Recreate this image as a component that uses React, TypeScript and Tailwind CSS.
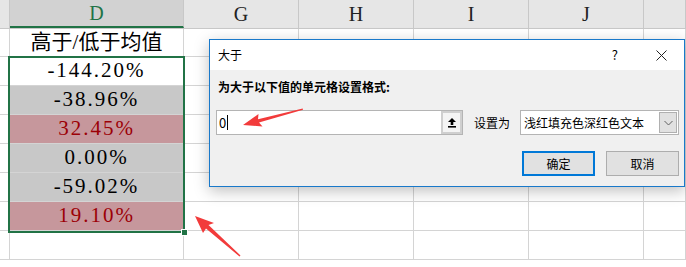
import React from 'react';

// 列宽（含右侧网格线）
const COLS = [
  { key: 'C', w: 'w-[10px]' },
  { key: 'D', w: 'w-[174px]' },
  { key: 'G', w: 'w-[115px]' },
  { key: 'H', w: 'w-[115px]' },
  { key: 'I', w: 'w-[115px]' },
  { key: 'J', w: 'w-[115px]' },
  { key: 'K', w: 'flex-1' },
];

const ROWS: { text: string; tone: 'title' | 'white' | 'grey' | 'red' | 'empty' }[] = [
  { text: '高于/低于均值', tone: 'title' },
  { text: '-144.20%', tone: 'white' },
  { text: '-38.96%', tone: 'grey' },
  { text: '32.45%', tone: 'red' },
  { text: '0.00%', tone: 'grey' },
  { text: '-59.02%', tone: 'grey' },
  { text: '19.10%', tone: 'red' },
  { text: '', tone: 'empty' },
];

const serif = { fontFamily: '"Liberation Serif", "Noto Sans CJK SC", serif' };
const ui = { fontFamily: '"Noto Sans CJK SC", "Liberation Sans", sans-serif' };

const toneClass = {
  title: 'bg-white text-black',
  white: 'bg-white text-black',
  grey: 'bg-[#c8c8c8] text-black',
  red: 'bg-[#c6979c] text-[#9c0006]',
  empty: 'bg-white',
};

const App: React.FC = () => {
  return (
    <div className="relative w-[686px] h-[267px] overflow-hidden bg-white select-none">
      {/* 列标题 */}
      <div className="flex h-[29px] bg-[#e6e6e6] border-b border-[#c8c8c8]">
        {COLS.map((c) => (
          <div
            key={c.key}
            className={`${c.w} shrink-0 flex items-center justify-center border-r border-[#c8c8c8] text-[20px] ${
              c.key === 'D' ? 'bg-[#d2d2d2] text-[#217346] border-b-2 border-b-[#217346]' : 'text-[#222]'
            }`}
            style={serif}
          >
            {c.key === 'C' || c.key === 'K' ? '' : c.key}
          </div>
        ))}
      </div>

      {/* 数据行 */}
      {ROWS.map((r, i) => (
        <div key={i} className={`flex ${i === 0 ? 'h-[28px]' : 'h-[29px]'}`}>
          {COLS.map((c) => (
            <div
              key={c.key}
              className={`${c.w} shrink-0 border-r border-b border-[#d4d4d4] ${
                c.key === 'D' ? `${toneClass[r.tone]} flex items-center justify-center` : ''
              } ${r.tone === 'title' ? 'text-[21px]' : 'text-[21px] tracking-[2px]'}`}
              style={serif}
            >
              {c.key === 'D' ? r.text : ''}
            </div>
          ))}
        </div>
      ))}

      {/* 选区边框 */}
      <div className="absolute left-[8px] top-[56px] w-[177px] h-[177px] border-2 border-[#217346] pointer-events-none" />
      <div className="absolute left-[181px] top-[229px] w-[7px] h-[7px] bg-[#217346] border border-white" />

      {/* 对话框 */}
      <div
        className="absolute left-[209px] top-[39px] w-[476px] h-[148px] border border-[#1979ca] bg-[#f0f0f0] shadow-[0_4px_14px_rgba(0,0,0,0.25)] flex flex-col"
        style={ui}
      >
        <div className="h-[30px] bg-white flex items-center pl-[8px] pr-[17px] text-[12px] text-black">
          <span className="flex-1">大于</span>
          <span className="mr-[38px] text-[13px]">?</span>
          <svg width="11" height="11" viewBox="0 0 11 11">
            <path d="M0.5 0.5 L10.5 10.5 M10.5 0.5 L0.5 10.5" stroke="#222" strokeWidth="1" />
          </svg>
        </div>

        <div className="pl-[6px] pr-[5px] pt-[9px]">
          <div className="pl-[2px] text-[12px] font-bold text-black leading-[16px]">为大于以下值的单元格设置格式:</div>

          <div className="flex items-center mt-[15px] h-[25px] whitespace-nowrap">
            <div className="w-[247px] shrink-0 h-full flex bg-white border border-[#b4b4b4]">
              <div className="flex-1 flex items-center pl-[2px] text-[13px] text-black">
                0<span className="ml-[1px] w-px h-[15px] bg-black" />
              </div>
              <div className="w-[21px] h-full border-2 border-[#cfcfcf] bg-[#f4f4f4] flex items-center justify-center">
                <svg width="10" height="11" viewBox="0 0 10 11">
                  <path d="M5 1 L9 5 L6.3 5 L6.3 8 L3.7 8 L3.7 5 L1 5 Z" fill="#000" />
                  <rect x="1" y="9" width="8" height="1.6" fill="#000" />
                </svg>
              </div>
            </div>
            <span className="ml-[11px] shrink-0 text-[12px] text-black">设置为</span>
            <div className="ml-[10px] w-[159px] shrink-0 h-full flex items-center bg-white border border-[#b4b4b4] pl-[3px] pr-[1px]">
              <span className="flex-1 text-[12px] text-black">浅红填充色深红色文本</span>
              <div className="w-[18px] h-[21px] bg-[#e1e1e1] border border-[#b0b0b0] flex items-center justify-center">
                <svg width="9" height="6" viewBox="0 0 9 6">
                  <path d="M0.5 1 L4.5 5 L8.5 1" stroke="#606060" strokeWidth="1" fill="none" />
                </svg>
              </div>
            </div>
          </div>

          <div className="flex justify-end mt-[16px] gap-[11px]">
            <button className="w-[73px] h-[25px] bg-[#e1e1e1] border-2 border-[#0078d7] text-[12px] text-black">
              确定
            </button>
            <button className="w-[73px] h-[25px] bg-[#e1e1e1] border border-[#adadad] text-[12px] text-black">
              取消
            </button>
          </div>
        </div>
      </div>

      {/* 红色箭头 */}
      <svg className="absolute inset-0 pointer-events-none" width="686" height="267">
        <polygon
          points="243,125 262.5,126.5 259,122.5 303,109.7 302.7,108.5 258,119.2 258.5,114"
          fill="#f23b3b"
        />
        <polygon
          points="195,216 203,233 206,228.5 239.5,256.5 240.5,255.5 208.5,225 214,223"
          fill="#f23b3b"
        />
      </svg>
    </div>
  );
};

export default App;
